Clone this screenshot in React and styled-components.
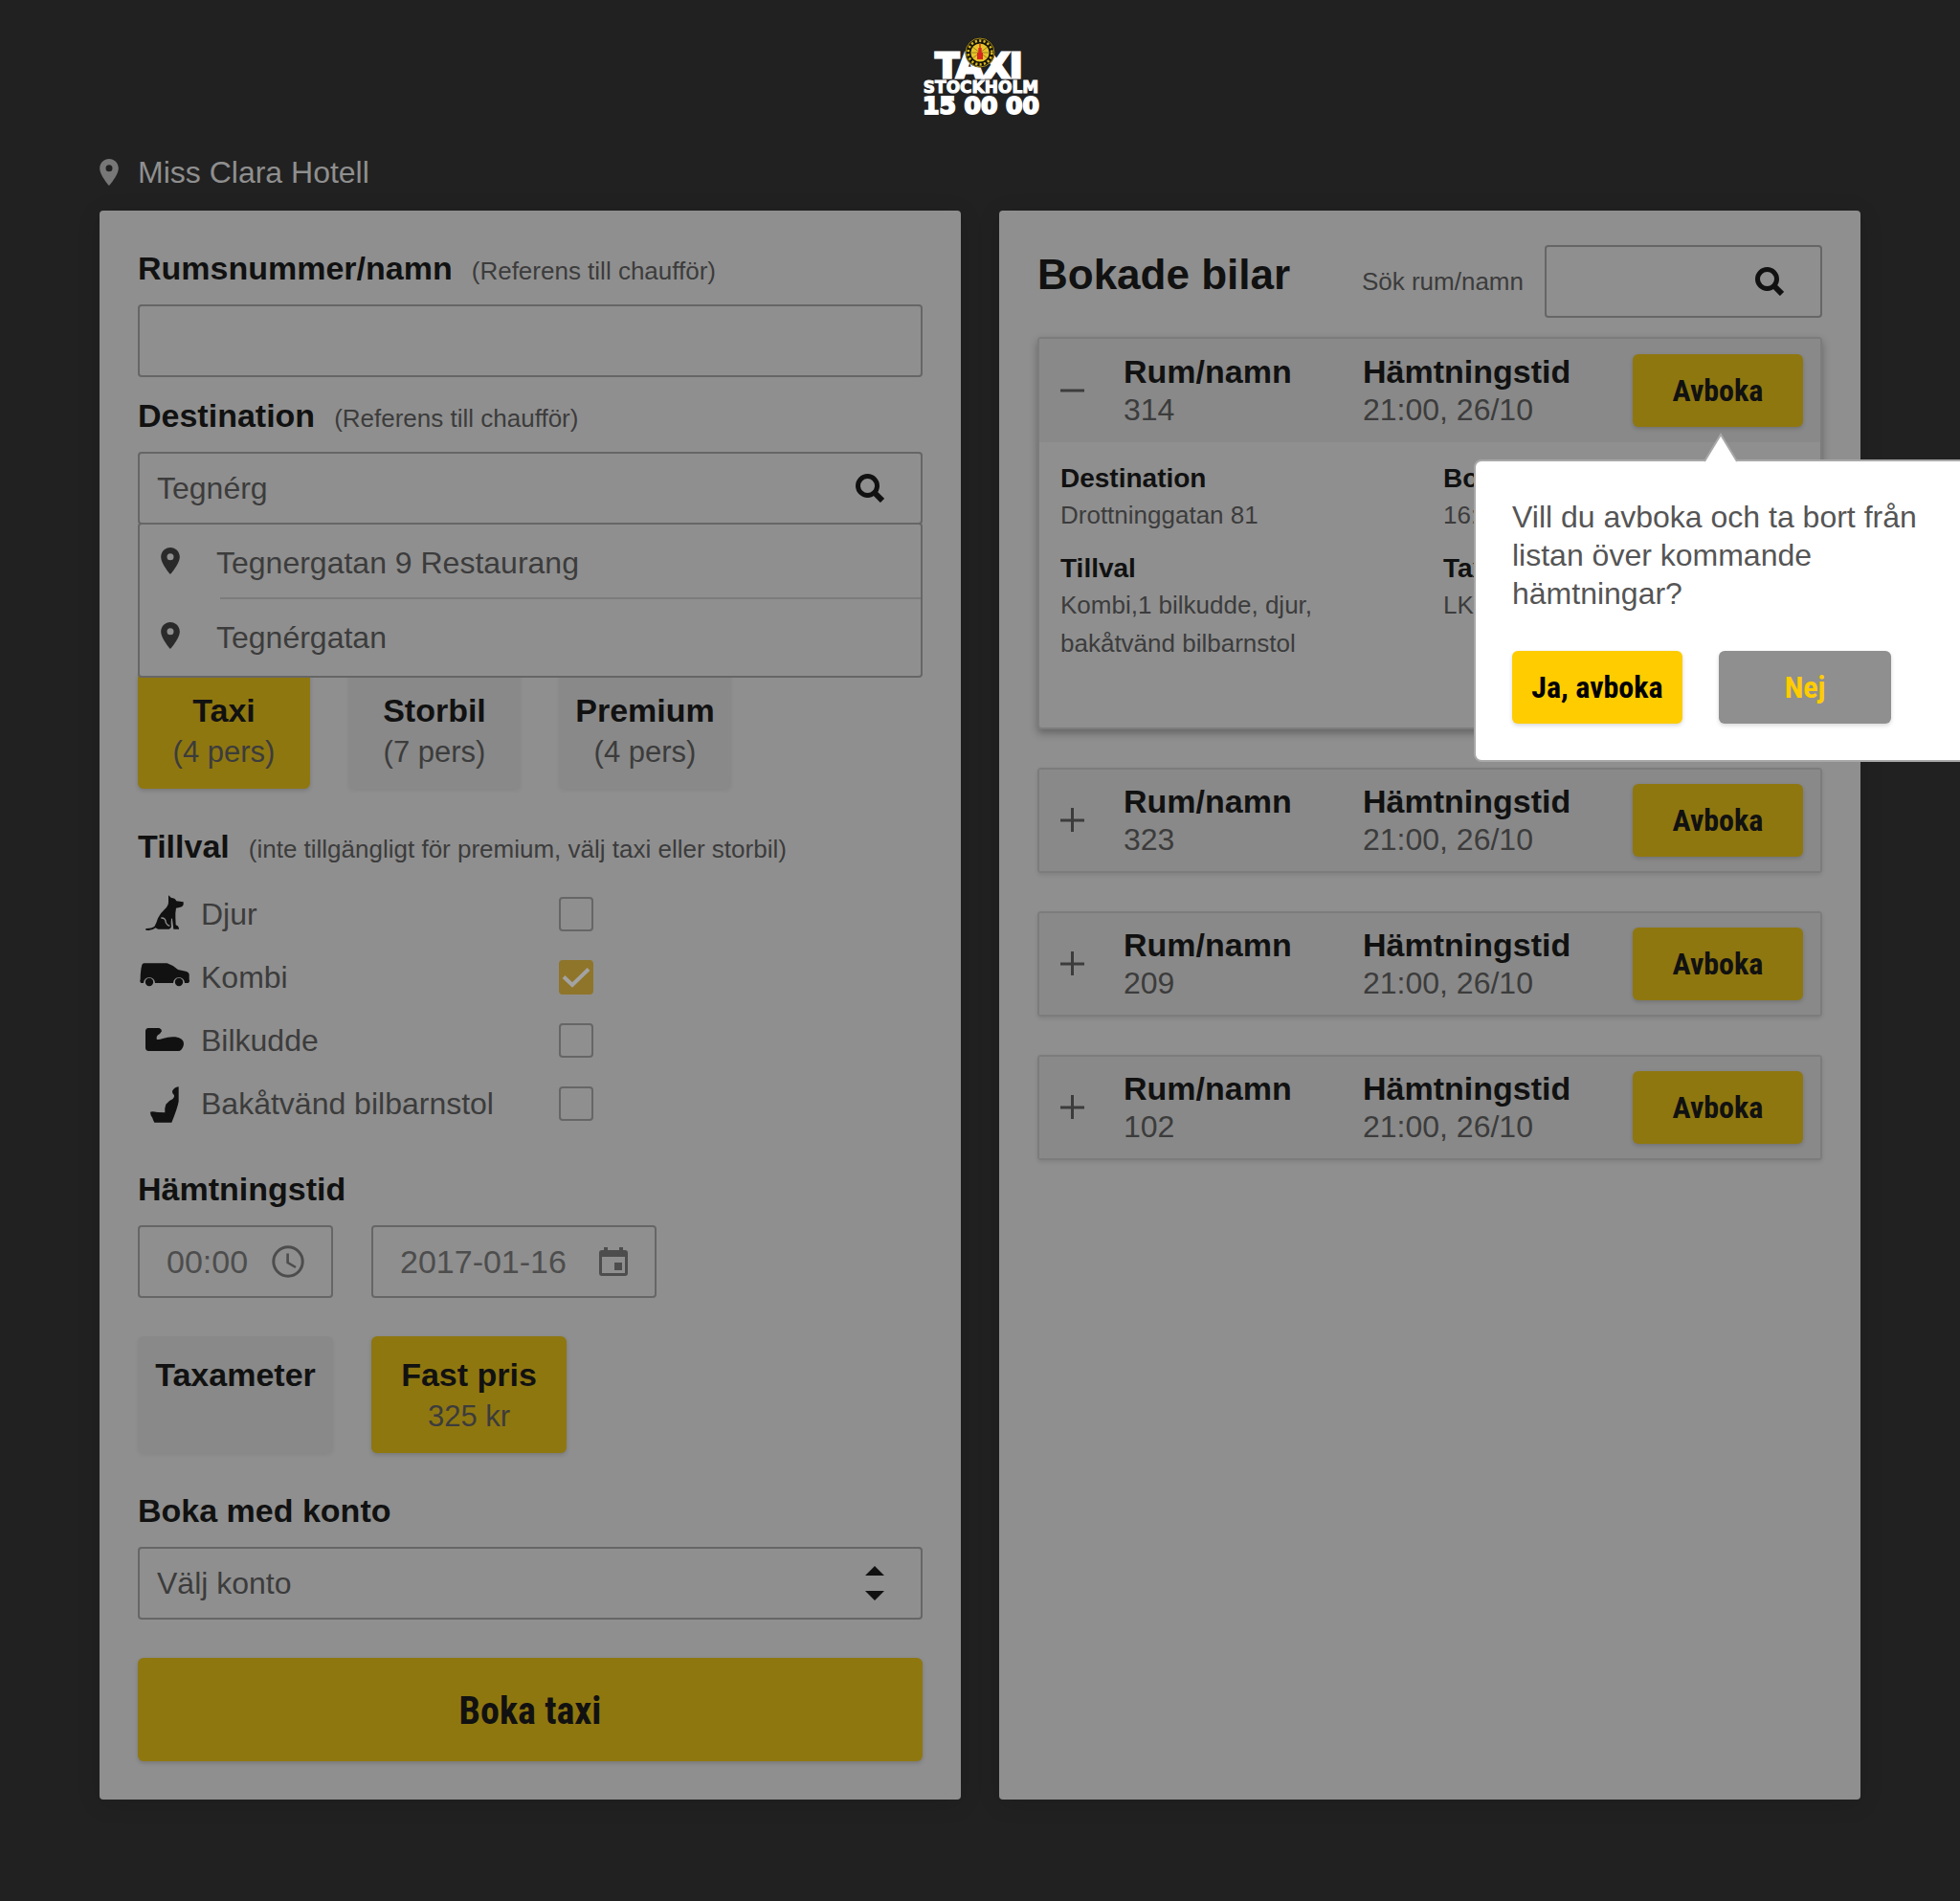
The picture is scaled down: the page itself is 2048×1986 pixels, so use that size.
import React, { useState } from "react";
import styled, { createGlobalStyle } from "styled-components";

const color = {
  page: "#212121",
  panel: "#8f8f8f",
  tile: "#898989",
  line: "#666666",
  softLine: "#7c7c7c",
  ink: "#111111",
  text: "#3c3c3c",
  muted: "#4d4d4d",
  accent: "#8f7710",
  brand: "#ffcc00",
};

const sans = `"Liberation Sans", Arial, sans-serif`;
const narrow = `"Liberation Sans Narrow", "Arial Narrow", "Roboto Condensed", Roboto, sans-serif`;

const GlobalStyle = createGlobalStyle`
  *, *::before, *::after { box-sizing: border-box; }
  body {
    margin: 0;
    background: ${color.page};
    color: ${color.text};
    font: 32px/40px ${sans};
    overflow-x: hidden;
  }
  button, input, select { font: inherit; color: inherit; margin: 0; }
  h1, h2, p, dl, dd, ul { margin: 0; padding: 0; }
`;

/* ---------- page frame ---------- */

const Page = styled.div`
  padding: 36px 104px 106px;
  overflow-x: clip;
`;

const Header = styled.header`
  display: flex;
  justify-content: center;
`;

const Place = styled.p`
  display: flex;
  align-items: center;
  gap: 20px;
  margin: 34px 0 20px;
  color: ${color.panel};

  svg { color: #777777; }
`;

const Columns = styled.main`
  display: grid;
  grid-template-columns: repeat(2, minmax(0, 1fr));
  gap: 40px;
`;

const Panel = styled.section`
  padding: ${(p) => (p.$list ? "36px 40px 40px" : "40px")};
  border-radius: 4px;
  background: ${color.panel};
  box-shadow: 0 4px 24px rgba(0, 0, 0, 0.12);
`;

/* ---------- form parts ---------- */

const LabelRow = styled.div`
  display: flex;
  align-items: baseline;
  gap: 20px;
  margin: ${(p) => p.$before || 0}px 0 18px;
`;

const Title = styled.label`
  color: ${color.ink};
  font-size: 34px;
  font-weight: 700;
`;

const Hint = styled.span`
  font-size: 26px;
  line-height: 32px;
`;

const Field = styled.div`
  display: flex;
  align-items: center;
  gap: 18px;
  width: ${(p) => p.$width || "100%"};
  height: 76px;
  padding: 0 ${(p) => p.$end || 18}px 0 ${(p) => p.$start || 18}px;
  border: 2px solid ${color.line};
  border-radius: 4px;
  color: ${(p) => (p.$muted ? color.muted : color.text)};
  font-size: ${(p) => (p.$muted ? 34 : 32)}px;

  svg { flex: none; }
`;

const TextInput = styled.input`
  flex: 1;
  width: 100%;
  min-width: 0;
  height: 100%;
  padding: 0;
  border: 0;
  outline: 0;
  background: transparent;
`;

const Select = styled.select`
  flex: 1;
  height: 100%;
  padding: 0;
  border: 0;
  outline: 0;
  appearance: none;
  background: transparent;
`;

const Combo = styled.div`
  position: relative;
`;

const Suggestions = styled.ul`
  position: absolute;
  z-index: 1;
  top: 74px;
  left: 0;
  right: 0;
  padding: 0 0 4px;
  border: 2px solid ${color.line};
  border-radius: 4px;
  background: ${color.panel};
  list-style: none;
`;

const SuggestionText = styled.span`
  padding-top: 20px;
`;

const Suggestion = styled.li`
  display: grid;
  grid-template-columns: 58px 1fr;
  height: 76px;
  padding-left: 22px;

  svg { margin-top: 24px; color: #2a2a2a; }

  & + & {
    grid-template-rows: 2px 1fr;
    height: 78px;
  }

  & + &::before {
    content: "";
    grid-column: 2;
    margin-left: 4px;
    background: ${color.softLine};
  }

  & + & svg {
    grid-column: 1;
  }
`;

const Tiles = styled.div`
  display: flex;
  gap: 40px;
  margin-top: ${(p) => p.$before}px;
`;

const Tile = styled.button`
  display: flex;
  flex-direction: column;
  align-items: center;
  width: ${(p) => p.$width}px;
  height: 122px;
  padding: 18px 0 0;
  border: 0;
  border-radius: 6px;
  background: ${(p) => (p.$active ? color.accent : color.tile)};
  box-shadow: 0 2px 4px rgba(0, 0, 0, ${(p) => (p.$active ? 0.16 : 0.06)});
  font-size: 31px;
  line-height: 44px;

  strong { color: ${color.ink}; font-size: 34px; }
`;

const Options = styled.ul`
  list-style: none;
`;

const Option = styled.li`
  display: grid;
  grid-template-columns: 66px 374px 36px;
  align-items: center;
  height: 66px;
  color: ${color.text};

  & > svg { color: ${color.ink}; }
`;

const CheckWrap = styled.span`
  display: grid;

  & > * { grid-area: 1 / 1; }
  svg { pointer-events: none; color: #a3a3a3; }
`;

const Checkbox = styled.input`
  width: 36px;
  height: 36px;
  margin: 0;
  appearance: none;
  border: 2px solid ${color.line};
  border-radius: 4px;

  &:checked { border-color: #8f752a; background: #8f752a; }
`;

const Row = styled.div`
  display: flex;
  gap: 40px;
`;

const Submit = styled.button`
  width: 100%;
  height: 108px;
  margin-top: 40px;
  padding: 4px 0 0;
  border: 0;
  border-radius: 6px;
  background: ${color.accent};
  box-shadow: 0 2px 4px rgba(0, 0, 0, 0.16);
  color: ${color.ink};
  font: 700 40px/40px ${narrow};
`;

/* ---------- bookings ---------- */

const ListHeader = styled.div`
  display: flex;
  align-items: center;
  margin-bottom: 20px;
`;

const ListTitle = styled.h1`
  flex: 1;
  align-self: flex-start;
  color: ${color.ink};
  font-size: 44px;
  line-height: 62px;
`;

const SearchLabel = styled.label`
  margin-right: 22px;
  font-size: 26px;
`;

const Bookings = styled.div`
  display: grid;
  gap: 40px;
`;

const Card = styled.article`
  border: 2px solid ${color.softLine};
  border-radius: 4px;
  background: ${(p) => (p.$open ? color.panel : color.tile)};
  box-shadow: ${(p) =>
    p.$open ? "0 4px 8px rgba(0, 0, 0, 0.3)" : "0 2px 4px rgba(0, 0, 0, 0.1)"};
`;

const CardHead = styled.div`
  display: grid;
  grid-template-columns: 66px 250px 1fr auto;
  align-items: center;
  height: ${(p) => (p.$open ? 108 : 106)}px;
  padding: 0 18px 0 22px;
  background: ${color.tile};
`;

const Toggle = styled.button`
  display: flex;
  padding: 0;
  border: 0;
  background: none;
  color: ${color.text};
`;

const Fact = styled.dl`
  dt { color: ${color.ink}; font-size: 34px; font-weight: 700; }
`;

const Anchor = styled.div`
  position: relative;
`;

const Action = styled.button`
  width: ${(p) => p.$width || 178}px;
  height: 76px;
  padding: 0;
  border: 0;
  border-radius: 6px;
  background: ${(p) => p.$fill || color.accent};
  box-shadow: 0 2px 4px rgba(0, 0, 0, 0.16);
  color: ${(p) => p.$ink || color.ink};
  font: 700 32px/40px ${narrow};
`;

const Details = styled.div`
  display: grid;
  grid-template-columns: 400px 1fr;
  align-content: start;
  row-gap: 18px;
  height: 298px;
  padding: 20px 22px;
`;

const Detail = styled.dl`
  font-size: 26px;

  dt { color: ${color.ink}; font-size: 28px; font-weight: 700; line-height: 36px; }
`;

const Popover = styled.div`
  position: absolute;
  z-index: 2;
  top: 110px;
  left: -166px;
  width: 540px;
  height: 316px;
  padding: 38px;
  border: 2px solid #a8a8a8;
  border-radius: 8px;
  background: #ffffff;
  color: #555555;
`;

const Arrow = styled.svg`
  position: absolute;
  top: -32px;
  left: 238px;
`;

const PopoverActions = styled.div`
  display: flex;
  gap: 38px;
  margin-top: 40px;
`;

/* ---------- drawings ---------- */

const Logo = () => (
  <svg width="136" height="90" viewBox="0 0 136 90" role="img" aria-label="Taxi Stockholm 15 00 00">
    <g fill="#ffffff" stroke="#ffffff" fontFamily="DejaVu Sans, sans-serif" fontWeight="700" textAnchor="middle">
      <text x="67" y="45" fontSize="36" strokeWidth="3">TAXI</text>
      <text x="69" y="61" fontSize="17" strokeWidth="1">STOCKHOLM</text>
      <text x="69" y="83" fontSize="25" strokeWidth="2">15 00 00</text>
    </g>
    <circle cx="68" cy="19" r="15.5" fill="#15130a" />
    <circle cx="68" cy="19" r="15" fill="none" stroke="#c9a81c" strokeWidth="0.8" />
    <circle cx="68" cy="19" r="12.4" fill="none" stroke="#d9b81c" strokeWidth="2.6" strokeDasharray="2.2 2.2" />
    <circle cx="68" cy="19" r="9.6" fill="#e6c42a" />
    <path d="M60 13 L76 25 M76 13 L60 25 M59 19 H77" stroke="#8a7415" strokeWidth="0.8" />
    <path d="M67.3 10 h1.4 v4 h1 v5 h1.3 v7 h-6 v-7 h1.3 v-5 h1z" fill="#d8281e" />
  </svg>
);

const Pin = () => (
  <svg width="20" height="28" viewBox="5 2 14 20" fill="currentColor" aria-hidden="true">
    <path d="M12 2C8.13 2 5 5.13 5 9c0 5.25 7 13 7 13s7-7.75 7-13c0-3.87-3.13-7-7-7zm0 9.5a2.5 2.5 0 1 1 0-5 2.5 2.5 0 0 1 0 5z" />
  </svg>
);

const Search = () => (
  <svg width="30" height="30" viewBox="0 0 30 30" fill="none" stroke={color.ink} aria-hidden="true">
    <circle cx="12.5" cy="12.5" r="10" strokeWidth="5" />
    <path d="M19.5 19.5 L28 28" strokeWidth="6" />
  </svg>
);

const Clock = () => (
  <svg width="34" height="34" viewBox="0 0 34 34" fill="none" stroke="currentColor" strokeWidth="3" aria-hidden="true">
    <circle cx="17" cy="17" r="15.2" />
    <path d="M16.6 8.5 V18 L25 23" strokeWidth="2.6" />
  </svg>
);

const Calendar = () => (
  <svg width="30" height="30" viewBox="0 0 30 30" fill="currentColor" aria-hidden="true">
    <path
      fillRule="evenodd"
      d="M5 0h4v3h12V0h4v3h2a3 3 0 0 1 3 3v21a3 3 0 0 1-3 3H3a3 3 0 0 1-3-3V6a3 3 0 0 1 3-3h2zM3 10v17h24V10zM16 16h8v8h-8z"
    />
  </svg>
);

const Stepper = () => (
  <svg width="20" height="36" viewBox="0 0 20 36" fill={color.ink} aria-hidden="true">
    <path d="M10 0 L20 10 H0z M0 26 H20 L10 36z" />
  </svg>
);

const Sign = ({ open }) => (
  <svg width="26" height="26" viewBox="0 0 26 26" stroke="currentColor" strokeWidth="3" aria-hidden="true">
    <path d={open ? "M0 13 H25" : "M0 13 H25 M12.5 0 V25"} />
  </svg>
);

const Check = () => (
  <svg width="36" height="36" viewBox="0 0 36 36" fill="none" stroke="currentColor" strokeWidth="4" aria-hidden="true">
    <path d="M5 17.5 L14 26 L31 9.5" />
  </svg>
);

const Glyph = ({ top, children }) => (
  <svg width="56" height="40" viewBox={`12 ${top} 168 120`} fill="currentColor" aria-hidden="true">
    {children}
  </svg>
);

const Dog = () => (
  <Glyph top={21}>
    <path d="M108 22 L117 30 Q128 30 133 40 L155 43 Q156 51 153 55 Q148 61 132 62 Q129 78 130 92 L131 115 Q140 117 141 125 V128 H124 L120 96 L117 94 Q115 110 117 121 Q115 127 110 128 H76 Q70 126 68 124 Q58 132 46 132 L37 131 V126 Q54 127 64 120 Q71 108 75 94 Q82 78 96 66 Q108 54 108 44z" />
    <path d="M85 93 Q99 92 100 108 Q104 116 112 118" fill="none" stroke={color.panel} strokeWidth="4" />
  </Glyph>
);

const Van = () => (
  <Glyph top={221}>
    <path d="M31 237 H104 Q120 242 138 257 L162 262 Q172 264 173 272 V288 Q176 295 170 299 H159 A18 18 0 0 0 123 299 H66 A18 18 0 0 0 30 299 H22 Q17 294 20 288 Q20 258 25 242 Q27 237 31 237z" />
    <circle cx="48" cy="296" r="12.5" />
    <circle cx="141" cy="296" r="12.5" />
  </Glyph>
);

const Booster = () => (
  <Glyph top={417}>
    <path d="M44 438 H79 Q87 440 87 448 Q83 456 75 460 Q68 466 71 473 Q78 475 90 471 Q110 464 130 466 Q156 470 156 488 Q154 504 142 510 H46 Q36 508 36 500 V446 Q37 438 44 438z" />
  </Glyph>
);

const ChildSeat = () => (
  <Glyph top={615}>
    <path d="M140 622 V668 Q136 690 118 734 H64 Q60 728 58 720 Q51 712 51 701 Q56 698 74 702 L97 703 Q95 690 100 677 Q108 666 121 661 Q128 656 126 649 Q119 644 120 636 Q125 624 140 622z" />
  </Glyph>
);

/* ---------- content ---------- */

const cars = [
  { name: "Taxi", seats: "(4 pers)" },
  { name: "Storbil", seats: "(7 pers)" },
  { name: "Premium", seats: "(4 pers)" },
];

const extras = [
  { id: "djur", label: "Djur", Icon: Dog },
  { id: "kombi", label: "Kombi", Icon: Van },
  { id: "bilkudde", label: "Bilkudde", Icon: Booster },
  { id: "barnstol", label: "Bakåtvänd bilbarnstol", Icon: ChildSeat },
];

const bookings = [
  { room: "314", open: true },
  { room: "323" },
  { room: "209" },
  { room: "102" },
];

function BookingForm() {
  const [car, setCar] = useState("Taxi");
  const [price, setPrice] = useState("fixed");
  const [chosen, setChosen] = useState({ kombi: true });

  return (
    <Panel as="form" onSubmit={(e) => e.preventDefault()}>
      <LabelRow>
        <Title htmlFor="room">Rumsnummer/namn</Title>
        <Hint>(Referens till chaufför)</Hint>
      </LabelRow>
      <Field>
        <TextInput id="room" type="text" />
      </Field>

      <LabelRow $before={20}>
        <Title htmlFor="destination">Destination</Title>
        <Hint>(Referens till chaufför)</Hint>
      </LabelRow>
      <Combo>
        <Field $end={38}>
          <TextInput id="destination" type="text" defaultValue="Tegnérg" />
          <Search />
        </Field>
        <Suggestions>
          {["Tegnergatan 9 Restaurang", "Tegnérgatan"].map((name) => (
            <Suggestion key={name}>
              <Pin />
              <SuggestionText>{name}</SuggestionText>
            </Suggestion>
          ))}
        </Suggestions>
      </Combo>

      <Tiles $before={154}>
        {cars.map(({ name, seats }) => (
          <Tile
            key={name}
            type="button"
            $width={180}
            $active={car === name}
            aria-pressed={car === name}
            onClick={() => setCar(name)}
          >
            <strong>{name}</strong>
            {seats}
          </Tile>
        ))}
      </Tiles>

      <LabelRow $before={40}>
        <Title as="span">Tillval</Title>
        <Hint>(inte tillgängligt för premium, välj taxi eller storbil)</Hint>
      </LabelRow>
      <Options>
        {extras.map(({ id, label, Icon }) => (
          <Option key={id}>
            <Icon />
            <label htmlFor={id}>{label}</label>
            <CheckWrap>
              <Checkbox
                id={id}
                type="checkbox"
                checked={!!chosen[id]}
                onChange={(e) => setChosen({ ...chosen, [id]: e.target.checked })}
              />
              {chosen[id] && <Check />}
            </CheckWrap>
          </Option>
        ))}
      </Options>

      <LabelRow $before={36}>
        <Title htmlFor="time">Hämtningstid</Title>
      </LabelRow>
      <Row>
        <Field $width="204px" $start={28} $end={28} $muted>
          <TextInput id="time" type="text" defaultValue="00:00" />
          <Clock />
        </Field>
        <Field $width="298px" $start={28} $end={28} $muted>
          <TextInput type="text" aria-label="Datum" defaultValue="2017-01-16" />
          <Calendar />
        </Field>
      </Row>

      <Tiles $before={40}>
        <Tile
          type="button"
          $width={204}
          $active={price === "meter"}
          aria-pressed={price === "meter"}
          onClick={() => setPrice("meter")}
        >
          <strong>Taxameter</strong>
        </Tile>
        <Tile
          type="button"
          $width={204}
          $active={price === "fixed"}
          aria-pressed={price === "fixed"}
          onClick={() => setPrice("fixed")}
        >
          <strong>Fast pris</strong>
          325 kr
        </Tile>
      </Tiles>

      <LabelRow $before={40}>
        <Title htmlFor="account">Boka med konto</Title>
      </LabelRow>
      <Field $end={38}>
        <Select id="account">
          <option>Välj konto</option>
        </Select>
        <Stepper />
      </Field>

      <Submit type="submit">Boka taxi</Submit>
    </Panel>
  );
}

function CancelPopover() {
  return (
    <Popover role="dialog" aria-label="Avboka">
      <Arrow width="36" height="34" viewBox="0 0 36 34" aria-hidden="true">
        <path d="M1 32 L18 4 L35 32" fill="#ffffff" stroke="#a8a8a8" strokeWidth="2" />
        <path d="M2 32 H34 V34 H2z" fill="#ffffff" />
      </Arrow>
      <p>Vill du avboka och ta bort från listan över kommande hämtningar?</p>
      <PopoverActions>
        <Action type="button" $fill={color.brand} $ink="#000000">Ja, avboka</Action>
        <Action type="button" $width={180} $fill={color.panel} $ink={color.brand}>Nej</Action>
      </PopoverActions>
    </Popover>
  );
}

function Booking({ room, open }) {
  return (
    <Card $open={open}>
      <CardHead $open={open}>
        <Toggle type="button" aria-expanded={!!open} aria-label={`Rum ${room}`}>
          <Sign open={open} />
        </Toggle>
        <Fact>
          <dt>Rum/namn</dt>
          <dd>{room}</dd>
        </Fact>
        <Fact>
          <dt>Hämtningstid</dt>
          <dd>21:00, 26/10</dd>
        </Fact>
        <Anchor>
          <Action type="button">Avboka</Action>
          {open && <CancelPopover />}
        </Anchor>
      </CardHead>
      {open && (
        <Details>
          <Detail>
            <dt>Destination</dt>
            <dd>Drottninggatan 81</dd>
          </Detail>
          <Detail>
            <dt>Bokad</dt>
            <dd>16:00</dd>
          </Detail>
          <Detail>
            <dt>Tillval</dt>
            <dd>Kombi,1 bilkudde, djur,<br />bakåtvänd bilbarnstol</dd>
          </Detail>
          <Detail>
            <dt>Taxi</dt>
            <dd>LK</dd>
          </Detail>
        </Details>
      )}
    </Card>
  );
}

export default function App() {
  return (
    <Page>
      <GlobalStyle />
      <Header><Logo /></Header>
      <Place><Pin />Miss Clara Hotell</Place>
      <Columns>
        <BookingForm />
        <Panel $list>
          <ListHeader>
            <ListTitle>Bokade bilar</ListTitle>
            <SearchLabel htmlFor="search">Sök rum/namn</SearchLabel>
            <Field $width="290px" $end={38}>
              <TextInput id="search" type="text" />
              <Search />
            </Field>
          </ListHeader>
          <Bookings>
            {bookings.map((b) => <Booking key={b.room} {...b} />)}
          </Bookings>
        </Panel>
      </Columns>
    </Page>
  );
}
